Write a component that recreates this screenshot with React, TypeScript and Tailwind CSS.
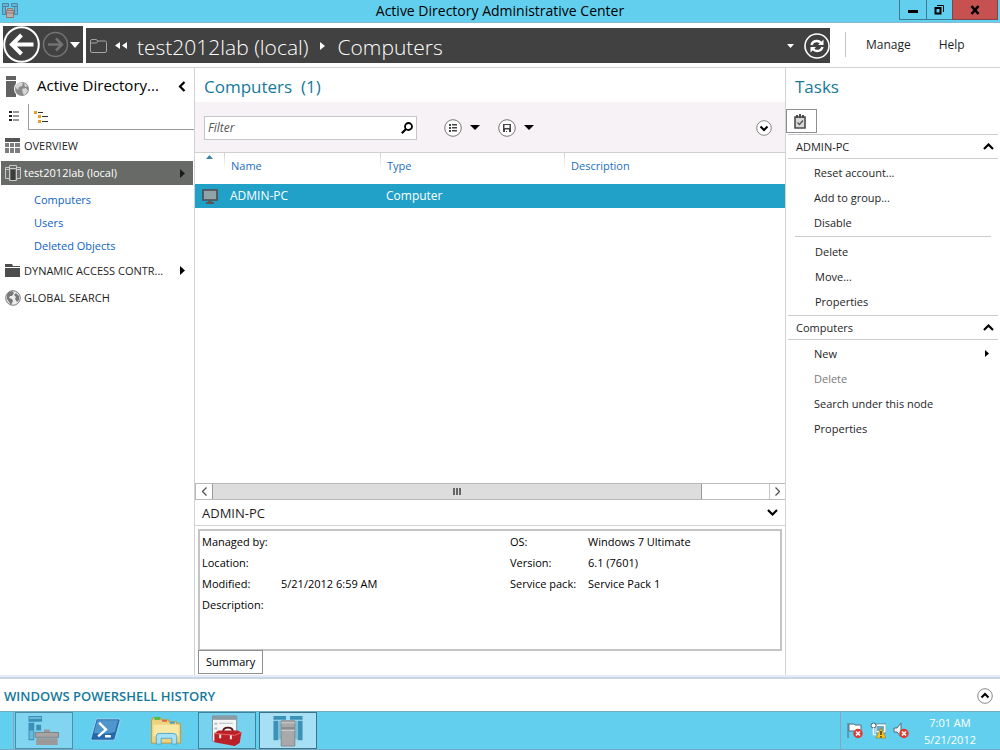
import type { ReactNode } from "react";

const adminTasks = ["Reset account...", "Add to group...", "Disable"];
const objectTasks = ["Delete", "Move...", "Properties"];

export default function App() {
  return (
    <div className="flex min-h-screen flex-col bg-white font-['Open_Sans','Noto_Sans',sans-serif] text-[11px] leading-4 text-[#1e1e1e]">
      <TitleBar />
      <NavBar />

      <main className="flex flex-1">
        <Sidebar />
        <Content />
        <Tasks />
      </main>

      {/* PowerShell history */}
      <section className="border-t-2 border-[#e3ecf8]">
        <div className="flex h-[34px] items-center justify-between border-t-2 border-[#ccd6e2] pt-px pr-[7px] pl-1">
          <h2 className="text-[13px] font-semibold text-[#16799c]">WINDOWS POWERSHELL HISTORY</h2>
          <button type="button" aria-label="Expand history">
            <CircleChevron up />
          </button>
        </div>
      </section>

      <Taskbar />
    </div>
  );
}

function TitleBar() {
  return (
    <header className="grid h-[23px] grid-cols-[1fr_auto_1fr] border-b border-[#8ab9d0] bg-[#62cfee]">
      <svg className="mt-0.5 ml-0.5 h-[17px] w-[17px]" viewBox="0 0 17 17" fill="#63b5d3" stroke="#4f86a3">
        <path d="M.5 1.500h6v3h-6zM9.500 1.500h6v3h-6zM.5 4.500h3v8h-3zM12.500 4.500h3v8h-3z" />
        <path d="M4.500 8.500h7v7h-7zM5.500 6.500h5v2h-5zM5 11h6" fill="#b9b0ac" stroke="#98766e" />
      </svg>
      <h1 className="text-[14px] leading-[22px] text-black">Active Directory Administrative Center</h1>
      <div className="mr-0.5 flex h-5 justify-end">
        <button type="button" aria-label="Minimize" className="flex w-7 items-center justify-center border border-t-0 border-[#3d7d92]">
          <span className="mt-1 h-[3px] w-2.5 bg-black" />
        </button>
        <button type="button" aria-label="Restore" className="flex w-[25px] items-center justify-center border-b border-[#3d7d92]">
          <svg className="h-[11px] w-[11px]" viewBox="0 0 11 11" fill="none" stroke="#000">
            <path d="M3 1.500h6.500V8" />
            <path d="M1.500 4h5v5.500h-5z" strokeWidth="2" />
          </svg>
        </button>
        <button type="button" aria-label="Close" className="flex w-[46px] items-center justify-center border border-t-0 border-[#7d4449] bg-[#c75050]">
          <svg className="h-2.5 w-2.5" viewBox="0 0 10 10" stroke="#000" strokeWidth="2.600">
            <path d="M1.500 1 8.500 9M8.500 1l-7 8" />
          </svg>
        </button>
      </div>
    </header>
  );
}

function NavBar() {
  return (
    <nav className="flex h-[45px] gap-[3px] border-b border-[#d2d2d2] pt-[3px] pb-1 pl-[3px]">
      <div className="flex w-20 items-center bg-[#414141]">
        <button type="button" aria-label="Back">
          <svg className="h-[37px] w-[37px]" viewBox="0 0 37 37" fill="none" stroke="#fff">
            <circle cx="18.500" cy="18.500" r="17.300" strokeWidth="2" />
            <path d="M30.500 18.500H9M18.500 9l-9.500 9.500 9.500 9.500" strokeWidth="4" />
          </svg>
        </button>
        <button type="button" aria-label="Forward" className="ml-0.5">
          <svg className="h-[27px] w-[27px]" viewBox="0 0 27 27" fill="none" stroke="#737373">
            <circle cx="13.500" cy="13.500" r="12" strokeWidth="1.500" />
            <path d="M6 13.500h13.500M14 7.500l6 6-6 6" strokeWidth="2.500" />
          </svg>
        </button>
        <button type="button" aria-label="Recent locations">
          <Caret className="ml-px h-1.5 w-[10px] text-white" />
        </button>
      </div>

      <div className="mt-0.5 flex flex-1 items-center bg-[#414141] pl-1 text-[21px] leading-[34px] font-light text-white">
        <svg className="h-4 w-[17px]" viewBox="0 0 17 16" fill="none" stroke="#a5a5a5">
          <path d="M.5 13V3q0-1.500 1.500-1.500h4q1 0 1.500 1.500H15q1.500 0 1.500 1.500V13q0 1.500-1.500 1.500H2Q.5 14.500.5 13zM1 5h5.500L8 3" />
        </svg>
        <svg className="ml-2 h-[7px] w-3" viewBox="0 0 12 7" fill="#fff">
          <path d="M5 0v7L0 3.500zM12 0v7L7 3.500z" />
        </svg>
        <a href="#domain" className="ml-2.5 pt-0.5">test2012lab (local)</a>
        <Caret right className="mx-3 h-2 w-[5px]" />
        <a href="#computers" className="pt-0.5">Computers</a>
        <button type="button" aria-label="Path history" className="ml-auto">
          <Caret className="h-1 w-[7px]" />
        </button>
        <button type="button" aria-label="Refresh" className="ml-2.5">
          <svg className="h-[26px] w-[26px]" viewBox="0 0 26 26" fill="none" stroke="#fff">
            <circle cx="13" cy="13" r="12" strokeWidth="1.600" />
            <path d="M7.500 12q1-4 5.500-4 2.500 0 4 2M18.500 14q-1 4-5.500 4-2.500 0-4-2" strokeWidth="2.400" />
            <path d="M19.500 6.500V12H14zM6.500 19.500V14H12z" fill="#fff" stroke="none" />
          </svg>
        </button>
      </div>

      <div className="my-1.5 ml-3 flex w-[155px] items-center gap-7 border-l border-[#c8c8c8] pl-5 text-[12px]">
        <button type="button">Manage</button>
        <button type="button">Help</button>
      </div>
    </nav>
  );
}

function Sidebar() {
  return (
    <aside className="w-[195px] shrink-0 border-r border-[#d2d2d2]">
      <div className="flex h-9 items-center pr-2 pl-1.5">
        <svg className="h-[23px] w-6" viewBox="0 0 24 23">
          <path d="M0 1h10v4H0zM0 6h10v16H0z" fill="#626262" />
          <circle cx="16" cy="14" r="8" fill="#fff" />
          <circle cx="16" cy="14" r="7" fill="#8b8b8b" />
          <path d="m10 10 4-3 3 1-1 3-3 1-1 3-2-2zM16 14l4-1 2 3-3 4-2-1zM18 8l4 3-3 1z" fill="#d6d6d6" />
        </svg>
        <h2 className="ml-[7px] pb-0.5 text-[15px] leading-5 text-black">Active Directory...</h2>
        <button type="button" aria-label="Collapse pane" className="ml-auto">
          <svg className="h-[11px] w-2" viewBox="0 0 8 11" fill="none" stroke="#000" strokeWidth="2.200">
            <path d="M6.500 1 2 5.500 6.500 10" />
          </svg>
        </button>
      </div>

      <div className="flex h-[26px]">
        <button type="button" aria-label="List view" className="flex w-7 justify-center pt-1.5">
          <svg className="h-3 w-2.5" viewBox="0 0 10 12">
            <path d="M0 1h3v2H0zM0 5h3v2H0zM0 9h3v2H0z" fill="#222" />
            <path d="M4 1h6v2H4zM4 5h6v2H4zM4 9h6v2H4z" fill="#9a9a9a" />
          </svg>
        </button>
        <div className="flex-1 border-b border-l border-[#9b9b9b] pt-[7px] pl-[5px]">
          <button type="button" aria-label="Tree view">
            <svg className="h-3 w-3.5" viewBox="0 0 14 12">
              <path d="M0 0h3v3H0zM4 4h3v3H4zM4 9h3v3H4z" fill="#e5a029" />
              <path d="M4 1h5v1H4zM8 5h6v1H8zM8 10h6v1H8z" fill="#333" />
            </svg>
          </button>
        </div>
      </div>

      <TreeItem label="OVERVIEW">
        <svg className="h-[15px] w-[15px]" viewBox="0 0 15 15" fill="#7d7d7d">
          <path d="M0 0h15v4H0z" fill="#555" />
          <path d="M0 5h4v4H0zM5 5h4v4H5zM10 5h5v4h-5zM0 10h4v5H0zM5 10h4v5H5zM10 10h5v5h-5z" />
        </svg>
      </TreeItem>

      <a href="#domain" className="mr-px ml-px flex h-6 items-center bg-[#686a67] pr-2 pl-1 text-white">
        <svg className="h-4 w-4" viewBox="0 0 16 16" fill="none" stroke="#c9c9c9">
          <path d="M4.500 2.500h-4v11h4M11.500 2.500h4v11h-4M4.500.5h7v15h-7zM5 3.500h6M1 4.500h3M12 4.500h3" />
          <path d="M6 5h4v10H6z" fill="#3c3c3c" stroke="none" />
        </svg>
        <span className="ml-[3px]">test2012lab (local)</span>
        <Caret right className="ml-auto h-[9px] w-[5px] text-[#1b1b1b]" />
      </a>
      <ul className="pt-[3px] pl-[34px] leading-[23px] text-[#0b5fc4]">
        <li><a href="#computers">Computers</a></li>
        <li><a href="#users">Users</a></li>
        <li><a href="#deleted">Deleted Objects</a></li>
      </ul>

      <TreeItem label="DYNAMIC ACCESS CONTR..." arrow>
        <svg className="h-[13px] w-[15px]" viewBox="0 0 15 13" fill="#4d4d4d">
          <path d="M0 0h7l1 2h7v1H0zM0 4h15v9H0z" />
        </svg>
      </TreeItem>
      <TreeItem label="GLOBAL SEARCH">
        <svg className="h-4 w-4" viewBox="0 0 16 16">
          <circle cx="8" cy="8" r="7.300" fill="#ececec" stroke="#777" />
          <path d="M2 5q1-3 5-4l2 2-2 3-2 0-1 2 3 1 1 2-2 4-2-3-2-3zM11 3l3 3v4l-2 2-2-3 1-2-2-2z" fill="#777" />
        </svg>
      </TreeItem>
    </aside>
  );
}

function TreeItem({ label, arrow, children }: { label: string; arrow?: boolean; children: ReactNode }) {
  return (
    <a href="#node" className="flex h-[27px] items-center pr-[9px] pl-[5px] first-of-type:h-[31px]">
      <span className="flex w-4 shrink-0">{children}</span>
      <span className="ml-[3px] whitespace-nowrap">{label}</span>
      {arrow && <Caret right className="ml-auto h-[9px] w-[5px] text-black" />}
    </a>
  );
}

function Content() {
  const column = "bg-[linear-gradient(#cfcfcf,#ffffff)] bg-[length:1px_16px] bg-no-repeat pb-[5px] pl-[7px] font-normal";
  return (
    <div className="flex min-w-0 flex-1 flex-col">
      <h2 className="pt-1.5 pb-0.5 pl-[9px] text-[17px] leading-[26px] text-[#16799c]">Computers&nbsp; (1)</h2>

      {/* Filter bar */}
      <div className="flex h-[51px] items-center border-b border-[#cfcfcf] bg-[#f6f2f6] pt-px pr-[13px] pl-[9px]">
        <div className="flex h-6 w-[213px] items-center border border-[#c6c6c6] bg-white pr-[3px]">
          <input
            aria-label="Filter"
            placeholder="Filter"
            className="min-w-0 flex-1 pl-[3px] text-[12px] italic outline-none placeholder:text-[#555]"
          />
          <button type="button" aria-label="Search">
            <svg className="h-3 w-3" viewBox="0 0 12 12" fill="none" stroke="#000">
              <circle cx="7.500" cy="4.500" r="3.500" strokeWidth="1.800" />
              <path d="M5 7 .8 11.200" strokeWidth="2.200" />
            </svg>
          </button>
        </div>
        <button type="button" aria-label="Criteria" className="ml-[27px] flex items-center gap-2">
          <svg className="h-[18px] w-[18px]" viewBox="0 0 18 18">
            <circle cx="9" cy="9" r="8.300" fill="#fff" stroke="#777" />
            <path d="M5 5h2v2H5zM5 8h2v2H5zM5 11h2v2H5zM8 5h5v1.500H8zM8 8h5v1.500H8zM8 11h5v1.500H8z" fill="#444" />
          </svg>
          <Caret className="h-[5px] w-2.5 text-black" />
        </button>
        <button type="button" aria-label="Save query" className="ml-[18px] flex items-center gap-2">
          <svg className="h-[18px] w-[18px]" viewBox="0 0 18 18">
            <circle cx="9" cy="9" r="8.300" fill="#fff" stroke="#777" />
            <path d="M5 5h8v8H5zM6.500 6v3h5V6zM7 10.500V13h1v-1h1v1h2v-2.500z" fill="#444" fillRule="evenodd" />
          </svg>
          <Caret className="h-[5px] w-2.5 text-black" />
        </button>
        <button type="button" aria-label="Expand filter" className="ml-auto">
          <CircleChevron />
        </button>
      </div>

      <table className="w-full table-fixed text-left">
        <colgroup>
          <col className="w-[29px]" />
          <col className="w-[156px]" />
          <col className="w-[184px]" />
          <col />
        </colgroup>
        <thead>
          <tr className="h-[31px] text-[#1a6fc0]">
            <th className="pl-[11px] align-top" aria-label="Sorted ascending">
              <svg className="mt-0.5 h-1 w-[7px]" viewBox="0 0 7 4" fill="#3c83a5">
                <path d="M0 4 3.500 0 7 4z" />
              </svg>
            </th>
            <th className={column}>Name</th>
            <th className={column}>Type</th>
            <th className={column}>Description</th>
          </tr>
        </thead>
        <tbody>
          <tr className="h-6 bg-[#21a0c8] text-[12px] text-white">
            <td className="pl-[7px]">
              <svg className="h-[15px] w-4" viewBox="0 0 16 15">
                <path d="M1 1h14v10H1z" fill="#8fa3a8" stroke="#4f4b4b" strokeWidth="1.600" />
                <path d="M6 12h4v1h2v2H4v-2h2z" fill="#5c5858" />
              </svg>
            </td>
            <td className="pl-1.5">ADMIN-PC</td>
            <td className="pl-1.5">Computer</td>
            <td />
          </tr>
        </tbody>
      </table>

      {/* Horizontal scroll bar */}
      <div className="mt-auto flex h-[17px] border border-r-0 border-[#b9b9b9]">
        <button type="button" aria-label="Scroll left" className="flex w-4 items-center justify-center">
          <ThinChevron />
        </button>
        <div className="flex-1">
          <div className="flex h-full w-[88%] items-center justify-center gap-px border-x border-[#9a9a9a] bg-[#dddddd]">
            <span className="h-[7px] w-0.5 bg-[#666]" />
            <span className="h-[7px] w-0.5 bg-[#666]" />
            <span className="h-[7px] w-0.5 bg-[#666]" />
          </div>
        </div>
        <button type="button" aria-label="Scroll right" className="flex w-4 items-center justify-center border-l border-[#c6c6c6]">
          <ThinChevron right />
        </button>
      </div>

      {/* Selected object */}
      <div className="flex h-[26px] items-center justify-between border-b border-[#d2d2d2] pr-[7px] pl-[7px]">
        <h3 className="text-[13px]">ADMIN-PC</h3>
        <button type="button" aria-label="Collapse details">
          <BoldChevron />
        </button>
      </div>
      <section className="px-[3px] pt-[3px] pb-px">
        <div className="flex h-[122px] border-2 border-[#c4c4c4] pl-0.5 leading-[21px] text-black">
          <dl className="grid w-[308px] grid-cols-[79px_1fr] content-start">
            <dt>Managed by:</dt>
            <dd />
            <dt>Location:</dt>
            <dd />
            <dt>Modified:</dt>
            <dd>5/21/2012 6:59 AM</dd>
            <dt>Description:</dt>
            <dd />
          </dl>
          <dl className="grid grid-cols-[78px_1fr] content-start">
            <dt>OS:</dt>
            <dd>Windows 7 Ultimate</dd>
            <dt>Version:</dt>
            <dd>6.1 (7601)</dd>
            <dt>Service pack:</dt>
            <dd>Service Pack 1</dd>
          </dl>
        </div>
        <button type="button" className="relative -mt-px block h-6 border border-[#8e8e95] bg-white px-[7px] text-black">
          Summary
        </button>
      </section>
    </div>
  );
}

function Tasks() {
  return (
    <aside className="w-[215px] shrink-0 border-l border-[#d2d2d2]">
      <h2 className="pt-1.5 pb-[9px] pl-[9px] text-[17px] leading-[26px] text-[#16799c]">Tasks</h2>
      <button type="button" aria-label="Task list" className="flex h-6 w-[31px] items-center border border-[#8e8e95] pl-[7px]">
        <svg className="h-[15px] w-3" viewBox="0 0 12 15">
          <path d="M1 3h10v11H1z" fill="#d8d8d8" stroke="#4a4a4a" strokeWidth="1.600" />
          <path d="M2 1h2v3H2zM5 0h2v4H5zM8 1h2v3H8z" fill="#4a4a4a" />
          <path d="m3.500 8.500 2 2 3.500-4" fill="none" stroke="#555" strokeWidth="1.400" />
        </svg>
      </button>

      <TaskHeading>ADMIN-PC</TaskHeading>
      <ul className="py-px">
        {adminTasks.map((task) => (
          <TaskItem key={task}>{task}</TaskItem>
        ))}
      </ul>
      <ul className="pl-px">
        <li className="mr-[9px] mb-0.5 ml-2 h-px bg-[#cccccc]" />
        {objectTasks.map((task) => (
          <TaskItem key={task}>{task}</TaskItem>
        ))}
      </ul>

      <TaskHeading>Computers</TaskHeading>
      <ul className="py-px">
        <TaskItem arrow>New</TaskItem>
        <TaskItem disabled>Delete</TaskItem>
        <TaskItem>Search under this node</TaskItem>
        <TaskItem>Properties</TaskItem>
      </ul>
    </aside>
  );
}

function TaskHeading({ children }: { children: ReactNode }) {
  return (
    <button type="button" className="mt-px mr-0.5 ml-0.5 flex h-[25px] w-[210px] items-center justify-between border-y border-[#cccccc] pr-1 pl-2">
      <span>{children}</span>
      <BoldChevron up />
    </button>
  );
}

function TaskItem({ children, arrow, disabled }: { children: ReactNode; arrow?: boolean; disabled?: boolean }) {
  return (
    <li>
      <button
        type="button"
        disabled={disabled}
        className="flex h-[25px] w-full items-center justify-between pr-[11px] pl-7 disabled:text-[#7a7a7a]"
      >
        {children}
        {arrow && <Caret right className="h-[7px] w-1 text-black" />}
      </button>
    </li>
  );
}

function Taskbar() {
  return (
    <footer className="flex h-[39px] border-y border-[#74a9c4] bg-[#62cfee] text-white">
      <div className="mr-px w-3.5 border-r border-[#8ba5bd]" />
      <div className="flex gap-[3px]">
        <TaskbarButton label="Server Manager" className="border-[#4c8ea6] bg-[#81d5f0]">
          <path d="M1 1h14v6H1zM1 8h6v18H1zM9 10h5v6H9z" fill="#3c8fb7" />
          <path d="M2 2h12v2H2zM2 16h4v9H2z" fill="#69b9d9" />
          <path d="M17 15h6v3h-6zM9 24h22v7H9z" fill="#9c9898" />
          <path d="M8 18h24v5H8z" fill="#a9a4a3" stroke="#7e8286" />
        </TaskbarButton>
        <TaskbarButton label="PowerShell" className="border-transparent">
          <path d="M9 4h22q2 0 1.500 2l-5 18q-.5 2-2.500 2H4q-2 0-1.500-2l5-18Q8 4 9 4z" fill="#2469aa" stroke="#9cd4ee" />
          <path d="M9 5.500h21.500l-3.500 12q-8 3-21.500 1z" fill="#4f96cd" />
          <path d="m11 8 7 7-8 7M17 22h6" fill="none" stroke="#fff" strokeWidth="2.500" />
        </TaskbarButton>
        <TaskbarButton label="File Explorer" className="border-transparent">
          <path d="M3 5V3h9v2h8v2h8v2h4v20H2V5z" fill="#efd37c" stroke="#c39c3e" />
          <path d="M5 2h6v3H5z" fill="#56b946" />
          <path d="M13 5h5v2h-5z" fill="#d9644f" />
          <path d="M21 7h5v2h-5z" fill="#4b9ad5" />
          <path d="M4 10h26v12H4z" fill="#f8e8a5" />
          <path d="M7 30v-8q0-3 3-3h14q4 0 4 3v8h-5v-6H12v6z" fill="#a8e0f4" stroke="#4fa9d1" />
        </TaskbarButton>
        <TaskbarButton label="Server tools" className="border-[#3f829b] bg-[#76d2ef]">
          <path d="M2 1h25v26H2z" fill="#f5f6f6" stroke="#7f8a92" />
          <path d="M2 1h25v4H2z" fill="#8c9aa4" />
          <path d="M4 8h3v2H4zM4 13h3v2H4zM4 18h3v2H4zM9 8h14v1H9z" fill="#b5bec4" />
          <path d="M13 17q0-4 5-4t5 4" fill="none" stroke="#4c1a1d" strokeWidth="2" />
          <path d="m4 19 4-3h20l4 2-2 11-5 3L4 28z" fill="#ba2027" />
          <path d="m4 19 21 2 7-3" fill="none" stroke="#ed6a65" />
          <path d="M9 20h2v4H9zM20 21h2v4h-2z" fill="#eee" />
        </TaskbarButton>
        <TaskbarButton label="Active Directory Administrative Center" className="border-[#3f7188] bg-[#a7dff5]">
          <path d="M2 1h13v4H2zM2 6h5v20H2zM19 1h13v4H19zM27 6h5v20h-5z" fill="#3c91b6" />
          <path d="M7 6h4v19H7zM23 6h4v19h-4z" fill="#7dbdd8" />
          <path d="M10 6h14v7H10zM10 14h14v18H10z" fill="#aaa9a9" stroke="#858889" />
          <path d="M10 8h14M10 16h14" stroke="#ccc" />
        </TaskbarButton>
      </div>

      {/* System tray */}
      <div className="ml-auto flex w-40 items-center border-l border-[#8ba5bd] pl-1.5">
        <div className="flex gap-[7px]">
          <svg className="h-[17px] w-4" viewBox="0 0 16 17">
            <path d="M1 1v15M2 2h5l1 1h6v7H8L7 9H2z" fill="#fff" stroke="#516d7a" />
            <ErrorBadge />
          </svg>
          <svg className="h-[17px] w-4" viewBox="0 0 16 17">
            <path d="M6 3h9v7H6z" fill="#6ba8c1" stroke="#fff" strokeWidth="2" />
            <path d="M6 2h10v9H6z" fill="none" stroke="#3e6678" strokeWidth=".6" />
            <circle cx="3.500" cy="3.500" r="2.500" fill="#fff" stroke="#3e6678" />
            <path d="M3.500 6v6.500H6" fill="none" stroke="#fff" strokeWidth="1.500" />
            <path d="m11 6 5 10H6z" fill="#f9c51d" stroke="#9e7a11" strokeWidth=".6" />
            <path d="M11 9v4M11 14v1.500" stroke="#222" strokeWidth="1.300" />
          </svg>
          <svg className="h-[17px] w-4" viewBox="0 0 16 17">
            <path d="M1 6h3l4-5v14l-4-5H1z" fill="#f2f2f2" stroke="#516d7a" />
            <ErrorBadge />
          </svg>
        </div>
        <time className="mr-6 ml-auto text-center leading-[17px]">
          7:01 AM
          <br />
          5/21/2012
        </time>
      </div>
    </footer>
  );
}

function TaskbarButton({ label, className, children }: { label: string; className: string; children: ReactNode }) {
  return (
    <button type="button" aria-label={label} className={`flex w-[58px] items-center justify-center border ${className}`}>
      <svg className="h-8 w-[34px]" viewBox="0 0 34 33">
        {children}
      </svg>
    </button>
  );
}

function ErrorBadge() {
  return (
    <g>
      <circle cx="11" cy="11.500" r="4.700" fill="#de3c33" />
      <path d="m9 9.500 4 4M13 9.500l-4 4" stroke="#fff" strokeWidth="1.600" />
    </g>
  );
}

function Caret({ right, className }: { right?: boolean; className: string }) {
  return (
    <svg className={className} viewBox="0 0 10 10" preserveAspectRatio="none" fill="currentColor">
      <path d={right ? "M0 0v10l10-5z" : "M0 0h10L5 10z"} />
    </svg>
  );
}

function BoldChevron({ up }: { up?: boolean }) {
  return (
    <svg className="h-[7px] w-[11px]" viewBox="0 0 11 7" fill="none" stroke="#000" strokeWidth="2.200">
      <path d={up ? "M1 6 5.500 1.500 10 6" : "M1 1l4.500 4.500L10 1"} />
    </svg>
  );
}

function ThinChevron({ right }: { right?: boolean }) {
  return (
    <svg className="h-[9px] w-[5px]" viewBox="0 0 5 9" fill="none" stroke="#555" strokeWidth="1.300">
      <path d={right ? "m.5.5 4 4-4 4" : "m4.500.5-4 4 4 4"} />
    </svg>
  );
}

function CircleChevron({ up }: { up?: boolean }) {
  return (
    <svg className="h-4 w-4" viewBox="0 0 16 16">
      <circle cx="8" cy="8" r="7.300" fill="#fff" stroke="#888" />
      <path d={up ? "M4.500 9.500 8 6l3.500 3.500" : "M4.500 6.500 8 10l3.500-3.500"} fill="none" stroke="#000" strokeWidth="2" />
    </svg>
  );
}
